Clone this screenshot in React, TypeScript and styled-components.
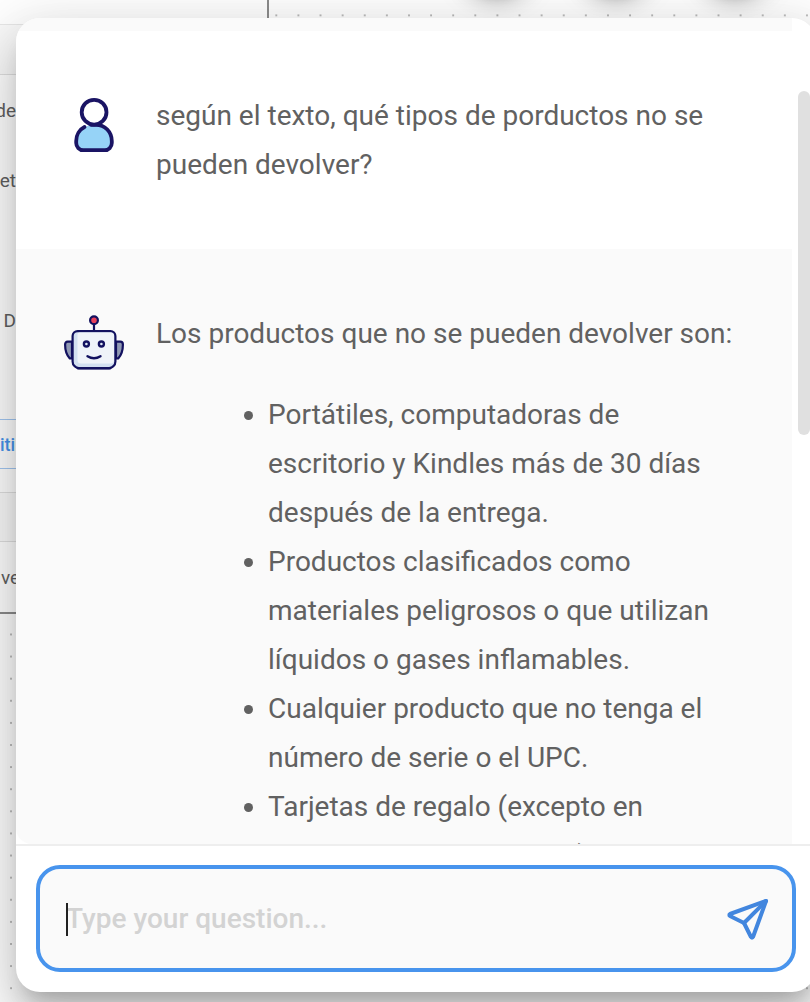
import React, { useState } from 'react';
import styled, { createGlobalStyle, css } from 'styled-components';

const GlobalStyle = createGlobalStyle`
  *, *::before, *::after { box-sizing: border-box; }
  body {
    margin: 0;
    font-family: Roboto, "Liberation Sans", sans-serif;
    color: #616161;
  }
`;

const Page = styled.main`
  position: relative;
  height: 100vh;
  overflow: hidden;
  background: #fff;
`;

/* ---------- flow canvas behind the chat ---------- */

const DotGrid = styled.svg`
  position: absolute;
  inset: 0;
  width: 100%;
  height: 100%;
`;

const NodeCard = styled.section`
  position: relative;
  width: 269px;
  background: #fff;
  border-right: 2px solid #8c8c8c;
  border-bottom: 2px solid #8c8c8c;
`;

const NodeStrip = styled.div`
  height: 25px;
  border-bottom: 1px solid #e8e8e8;
`;

const NodeSection = styled.div<{ $topLine?: boolean }>`
  height: 50px;
  background: #fafafa;
  border-bottom: 1px solid #e0e0e0;
  ${(p) => p.$topLine && css`border-top: 1px solid #e0e0e0;`}
`;

const NodeRow = styled.div<{ $start?: boolean }>`
  display: flex;
  align-items: center;
  justify-content: ${(p) => (p.$start ? 'flex-start' : 'flex-end')};
  width: ${(p) => (p.$start ? '100%' : '16px')};
  padding-left: ${(p) => (p.$start ? '1px' : '0')};
  height: 70px;
  font-size: 19px;
  white-space: nowrap;
`;

const NodeButton = styled.button`
  display: flex;
  align-items: center;
  width: 240px;
  height: 50px;
  margin: 64px 0 23px;
  padding: 0;
  border: 1px solid #a3c8f3;
  border-width: 1px 0;
  background: transparent;
  color: #4894ed;
  font: 500 18px Roboto, "Liberation Sans", sans-serif;
`;

const Toolbar = styled.div`
  position: absolute;
  top: -87px;
  right: 35px;
  display: flex;
  gap: 39px;
`;

const RoundAction = styled.div`
  width: 80px;
  height: 80px;
  border-radius: 50%;
  background: #fff;
  box-shadow: 0 6px 10px -2px rgba(0, 0, 0, 0.2), 0 12px 20px rgba(0, 0, 0, 0.14),
    0 2px 36px rgba(0, 0, 0, 0.12);
`;

/* ---------- chat ---------- */

const ChatPanel = styled.section`
  position: absolute;
  top: 18px;
  right: -6px;
  bottom: 10px;
  left: 16px;
  display: flex;
  flex-direction: column;
  border-radius: 24px;
  background: #fff;
  box-shadow: 0 16px 20px -10px rgba(0, 0, 0, 0.2), 0 32px 48px 4px rgba(0, 0, 0, 0.14),
    0 12px 60px 10px rgba(0, 0, 0, 0.12);
`;

const Conversation = styled.div`
  flex: 1;
  min-height: 0;
  display: flex;
  overflow: hidden;
  border-radius: 24px 24px 0 16px;
`;

const Messages = styled.div`
  flex: 1;
  min-width: 0;
  overflow-y: auto;
  scrollbar-width: none;
`;

const ScrollRail = styled.div`
  width: 24px;
  padding: 73px 6px 0;
`;

const ScrollThumb = styled.div`
  height: 344px;
  border-radius: 6px;
  background: #e0e0e0;
`;

const PreviousMessage = styled.div`
  height: 13px;
  background: #fafafa;
`;

const Message = styled.article<{ $bot?: boolean }>`
  display: flex;
  gap: 32px;
  padding: 60px 48px;
  background: ${(p) => (p.$bot ? '#fafafa' : '#fff')};
`;

const Avatar = styled.svg`
  flex: none;
  width: 60px;
  height: 60px;
  margin-top: 4px;
`;

const MessageBody = styled.div`
  flex: 1;
  font-size: 28px;
  line-height: 49px;

  p { margin: 0; }

  ul {
    margin: 32px 0;
    padding: 0 32px 0 112px;
  }
`;

const Footer = styled.footer`
  padding: 19px 20px 20px;
  border-top: 2px solid #eee;
`;

const InputBox = styled.form`
  position: relative;
  display: flex;
  align-items: center;
  height: 107px;
  padding: 0 20px 0 26px;
  border: 4px solid #4894ed;
  border-radius: 24px;
  background: #fafafa;
`;

const Question = styled.input`
  flex: 1;
  min-width: 0;
  padding: 0;
  border: 0;
  outline: 0;
  background: transparent;
  color: #212121;
  font: 500 28px/40px Roboto, "Liberation Sans", sans-serif;

  &::placeholder {
    color: #d3d3d3;
    opacity: 1;
  }
`;

const Caret = styled.span`
  position: absolute;
  top: 34px;
  left: 26px;
  width: 2px;
  height: 33px;
  background: #212121;
  pointer-events: none;
`;

const SendButton = styled.button`
  display: flex;
  padding: 0;
  border: 0;
  background: transparent;
  color: #4286de;
`;

const UserAvatar = () => (
  <Avatar viewBox="0 0 60 60" role="img" aria-label="Me">
    <g stroke="#1a1464" strokeWidth="3.8" strokeLinecap="round" strokeLinejoin="round">
      <path
        d="M20.5 32C15.5 34.5 12.2 40 12.2 46v2a7 7.2 0 0 0 7 7.2h21.6a7 7.2 0 0 0 7-7.2v-2C47.8 37 41 29.8 32 29.8h-5"
        fill="#96d3f7"
      />
      <circle cx="30.1" cy="17.2" r="12.4" fill="#fff" />
    </g>
  </Avatar>
);

const BotAvatar = () => (
  <Avatar viewBox="0 0 60 60" role="img" aria-label="AI">
    <g stroke="#12115f" strokeWidth="2.2" strokeLinecap="round" strokeLinejoin="round">
      <path d="M8 28.7H3.6Q1.1 28.7 1.1 31.4C1.1 37 2.6 42 5.8 45.4H8z" fill="#9099b4" />
      <path d="M52 28.7h4.4q2.5 0 2.5 2.7C58.9 37 57.4 42 54.2 45.4H52z" fill="#9099b4" />
      <path d="M30 11.5V18" />
      <circle cx="30" cy="7.3" r="3.9" fill="#e8415c" />
      <path
        d="M13.6 18.1h32.8a5 5 0 0 1 5 5v25.4q0 3-2 4.6l-1.4 1.1q-1.4 1-3 1H15q-1.6 0-3-1l-1.4-1.1q-2-1.6-2-4.6V23.1a5 5 0 0 1 5-5z"
        fill="#d3e0f1"
      />
    </g>
    <path d="M15.5 19.5h31q3.5 0 3.5 3.5v24q0 3.5-3.5 3.5H17q-3.500 0-3.500-3.500V21.5q0-2 2-2z" fill="#eff3f9" />
    <path d="M14 55.2h32" stroke="#12115f" strokeWidth="2.4" strokeLinecap="round" />
    <g stroke="#12115f" strokeWidth="2.4" fill="#dfe8f5" strokeLinecap="round">
      <circle cx="22.4" cy="31" r="2.5" />
      <circle cx="37.4" cy="31" r="2.5" />
      <path d="M23.5 43.2q6.500 4 13 0" fill="none" />
    </g>
  </Avatar>
);

const SendIcon = () => (
  <svg
    width="48"
    height="48"
    viewBox="0 0 24 24"
    fill="none"
    stroke="currentColor"
    strokeWidth="2"
    strokeLinecap="round"
    strokeLinejoin="round"
    aria-hidden="true"
  >
    <path d="M10 14L21 3" />
    <path d="M21 3l-6.5 18a.55.55 0 0 1-1 0L10 14l-7-3.5a.55.55 0 0 1 0-1L21 3" />
  </svg>
);

export default function App() {
  const [question, setQuestion] = useState('');
  const [focused, setFocused] = useState(false);

  return (
    <Page>
      <GlobalStyle />
      <DotGrid aria-hidden="true">
        <defs>
          <pattern id="dots" x="10" y="14.4" width="22.11" height="22.11" patternUnits="userSpaceOnUse">
            <circle cx="1" cy="1" r="1" fill="#a8a8a8" />
          </pattern>
        </defs>
        <rect width="100%" height="100%" fill="url(#dots)" />
      </DotGrid>

      <NodeCard>
        <NodeStrip />
        <NodeSection />
        <NodeRow>de</NodeRow>
        <NodeRow>et</NodeRow>
        <NodeRow />
        <NodeRow>D</NodeRow>
        <NodeButton type="button">iti</NodeButton>
        <NodeSection $topLine />
        <NodeRow $start>ve</NodeRow>
      </NodeCard>

      <Toolbar aria-hidden="true">
        <RoundAction />
        <RoundAction />
        <RoundAction />
      </Toolbar>

      <ChatPanel>
        <Conversation>
          <Messages>
            <PreviousMessage />
            <Message>
              <UserAvatar />
              <MessageBody>
                <p>según el texto, qué tipos de porductos no se pueden devolver?</p>
              </MessageBody>
            </Message>
            <Message $bot>
              <BotAvatar />
              <MessageBody>
                <p>Los productos que no se pueden devolver son:</p>
                <ul>
                  <li>Portátiles, computadoras de escritorio y Kindles más de 30 días después de la entrega.</li>
                  <li>Productos clasificados como materiales peligrosos o que utilizan líquidos o gases inflamables.</li>
                  <li>Cualquier producto que no tenga el número de serie o el UPC.</li>
                  <li>Tarjetas de regalo (excepto en casos en que así se exija).</li>
                </ul>
              </MessageBody>
            </Message>
          </Messages>
          <ScrollRail aria-hidden="true">
            <ScrollThumb />
          </ScrollRail>
        </Conversation>
        <Footer>
          <InputBox onSubmit={(e) => e.preventDefault()}>
            <Question
              type="text"
              aria-label="Question"
              placeholder="Type your question..."
              value={question}
              onChange={(e) => setQuestion(e.target.value)}
              onFocus={() => setFocused(true)}
              onBlur={() => setFocused(false)}
            />
            {!focused && !question && <Caret />}
            <SendButton type="submit" aria-label="Send">
              <SendIcon />
            </SendButton>
          </InputBox>
        </Footer>
      </ChatPanel>
    </Page>
  );
}
